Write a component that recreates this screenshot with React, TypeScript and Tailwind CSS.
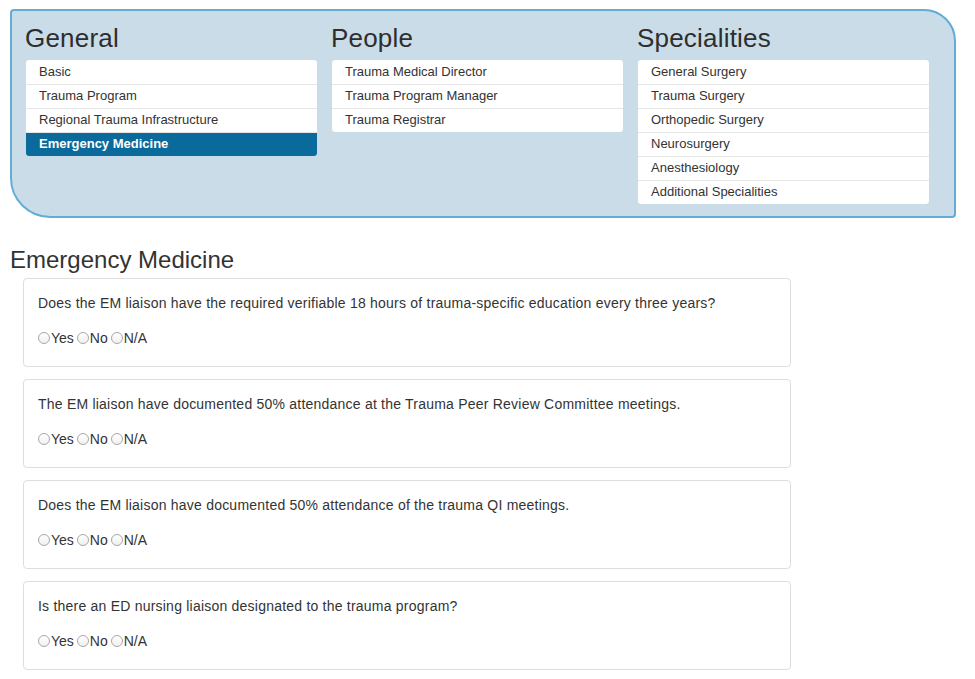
import React from "react";

const general = ["Basic", "Trauma Program", "Regional Trauma Infrastructure", "Emergency Medicine"];
const people = ["Trauma Medical Director", "Trauma Program Manager", "Trauma Registrar"];
const specialities = [
  "General Surgery",
  "Trauma Surgery",
  "Orthopedic Surgery",
  "Neurosurgery",
  "Anesthesiology",
  "Additional Specialities",
];

const questions = [
  "Does the EM liaison have the required verifiable 18 hours of trauma-specific education every three years?",
  "The EM liaison have documented 50% attendance at the Trauma Peer Review Committee meetings.",
  "Does the EM liaison have documented 50% attendance of the trauma QI meetings.",
  "Is there an ED nursing liaison designated to the trauma program?",
];

function NavColumn({ title, items, active }: { title: string; items: string[]; active?: string }) {
  return (
    <div className="w-[291px]">
      <h3 className="text-[26px] leading-[28.6px] text-[#2e2e2e] tracking-[0.2px] -ml-px mb-[7px]">{title}</h3>
      <div className="bg-white rounded-[3px] overflow-hidden">
        {items.map((item, i) => (
          <div
            key={item}
            className={`h-6 flex items-center pl-[13px] text-[13px] ${
              i > 0 ? "border-t border-[#e6e6e6]" : ""
            } ${item === active ? "bg-[#0a6a9c] text-white font-bold border-[#0a6a9c]" : "text-[#333]"}`}
          >
            {item}
          </div>
        ))}
      </div>
    </div>
  );
}

function Radio({ label }: { label: string }) {
  return (
    <label className="inline-flex items-center mr-[3px]">
      <span className="w-3 h-3 rounded-full border border-[#a8a8a8] bg-gradient-to-b from-white to-[#f0f0f0] mr-px" />
      <span>{label}</span>
    </label>
  );
}

export default function App() {
  return (
    <div
      className="min-h-screen bg-white pl-[10px] pt-[9px] text-[#333]"
      style={{ fontFamily: '"Liberation Sans", Arial, Helvetica, sans-serif' }}
    >
      <div className="w-[946px] h-[209px] border-2 border-[#62acd6] bg-[#c9dce8] rounded-tl-[4px] rounded-tr-[32px] rounded-br-[4px] rounded-bl-[40px] pl-[14px] pt-[13px]">
        <div className="flex gap-[15px]">
          <NavColumn title="General" items={general} active="Emergency Medicine" />
          <NavColumn title="People" items={people} />
          <NavColumn title="Specialities" items={specialities} />
        </div>
      </div>

      <h2 className="text-[24px] leading-[26.4px] mt-[29px] mb-[5px]">Emergency Medicine</h2>

      <div className="ml-[13px] w-[768px] flex flex-col gap-[12px]">
        {questions.map((q) => (
          <div
            key={q}
            className="border border-[#dedede] rounded-[4px] bg-white px-[14px] pt-[14px] pb-[18px] text-[14px] leading-5"
          >
            <p className="mb-[15px] tracking-[0.22px]">{q}</p>
            <div className="flex items-center h-5">
              <Radio label="Yes" />
              <Radio label="No" />
              <Radio label="N/A" />
            </div>
          </div>
        ))}
      </div>
    </div>
  );
}
